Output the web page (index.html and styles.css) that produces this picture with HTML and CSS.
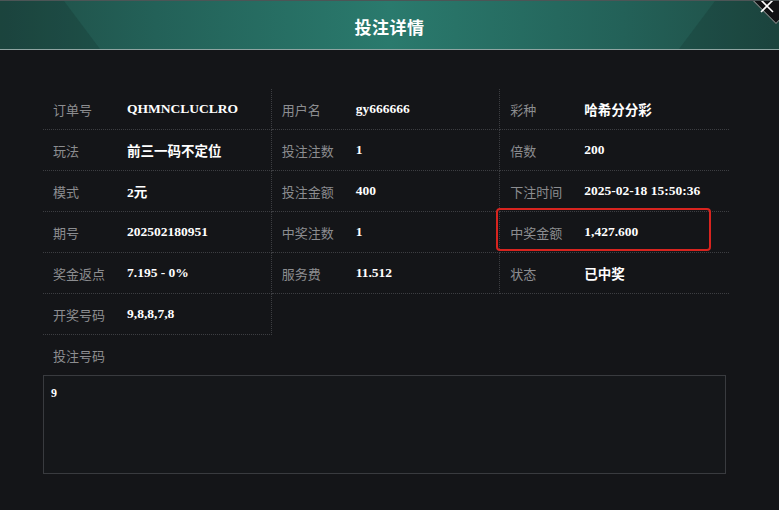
FILE: index.html
```html
<!DOCTYPE html>
<html lang="zh-CN">
<head>
    <meta charset="UTF-8">
    <meta name="viewport" content="width=device-width, initial-scale=1.0">
    <title>投注详情</title>
    <link rel="stylesheet" href="styles.css">
</head>
<body>
    <div class="modal">
        <div class="header">
            <h1>投注详情</h1>
            <div class="close">
                <svg width="14" height="14" viewBox="0 0 14 14">
                    <path d="M1 1 L13 13 M13 1 L1 13" stroke="#fff" stroke-width="1.6" fill="none"/>
                </svg>
            </div>
        </div>
        <div class="content">
            <div class="grid">
                <div class="item"><span class="label">订单号</span><span class="value">QHMNCLUCLRO</span></div>
                <div class="item"><span class="label">用户名</span><span class="value">gy666666</span></div>
                <div class="item"><span class="label">彩种</span><span class="value">哈希分分彩</span></div>

                <div class="item"><span class="label">玩法</span><span class="value">前三一码不定位</span></div>
                <div class="item"><span class="label">投注注数</span><span class="value">1</span></div>
                <div class="item"><span class="label">倍数</span><span class="value">200</span></div>

                <div class="item"><span class="label">模式</span><span class="value">2元</span></div>
                <div class="item"><span class="label">投注金额</span><span class="value">400</span></div>
                <div class="item"><span class="label">下注时间</span><span class="value">2025-02-18 15:50:36</span></div>

                <div class="item"><span class="label">期号</span><span class="value">202502180951</span></div>
                <div class="item"><span class="label">中奖注数</span><span class="value">1</span></div>
                <div class="item"><span class="label">中奖金额</span><span class="value">1,427.600</span><span class="mark"></span></div>

                <div class="item"><span class="label">奖金返点</span><span class="value">7.195 - 0%</span></div>
                <div class="item"><span class="label">服务费</span><span class="value">11.512</span></div>
                <div class="item"><span class="label">状态</span><span class="value">已中奖</span></div>

                <div class="item"><span class="label">开奖号码</span><span class="value">9,8,8,7,8</span></div>
            </div>

            <div class="codes-title">投注号码</div>
            <div class="codes">9</div>
        </div>
    </div>
</body>
</html>
```

FILE: styles.css
```css
body {
    margin: 0;
    padding: 0;
    background: #141518;
    font-family: "Noto Sans CJK SC", "Liberation Sans", sans-serif;
    overflow: hidden;
}
.modal {
    width: 779px;
    height: 510px;
    background: #141518;
}
.header {
    position: relative;
    height: 48px;
    border-top: 1px solid #4c5556;
    border-bottom: 1px solid #8fa5a2;
    background: linear-gradient(90deg, #1f4d45 0%, #236158 20%, #2a7a6d 50%, #236158 80%, #1f4d45 100%);
    display: flex;
    justify-content: center;
    align-items: center;
    overflow: hidden;
}
.header::before,
.header::after {
    content: "";
    position: absolute;
    top: 0;
    width: 110px;
    height: 100%;
    background: rgba(10, 30, 26, 0.18);
}
.header::before {
    left: 0;
    clip-path: polygon(0 0, 64px 0, 100px 100%, 0 100%);
}
.header::after {
    right: 0;
    clip-path: polygon(46px 0, 110px 0, 110px 100%, 10px 100%);
}
.header h1 {
    margin: 2px 0 0;
    font-size: 17px;
    font-weight: bold;
    color: #fff;
    letter-spacing: 0.5px;
}
.close {
    position: absolute;
    top: -24px;
    right: -20px;
    width: 46px;
    height: 46px;
    z-index: 2;
}
.close::before {
    content: "";
    position: absolute;
    left: 6px;
    top: 6px;
    width: 32px;
    height: 32px;
    background: #111214;
    border: 1px solid #8a9593;
    transform: rotate(45deg);
}
.close svg {
    position: absolute;
    left: 7px;
    top: 22px;
}
.content {
    padding: 39px 50px 0 43px;
}
.grid {
    display: flex;
    flex-wrap: wrap;
    width: 686px;
}
.item {
    position: relative;
    box-sizing: border-box;
    width: 33.333%;
    height: 41px;
    padding-left: 10px;
    display: flex;
    align-items: center;
    border-bottom: 1px dotted #3d3e42;
    border-right: 1px dotted #3d3e42;
}
.item:nth-child(3n) {
    border-right: none;
}
.label {
    width: 74px;
    flex-shrink: 0;
    font-size: 13px;
    color: #8c8d90;
}
.value {
    font-family: "Liberation Serif", "Noto Sans CJK SC", serif;
    font-size: 13.5px;
    font-weight: bold;
    color: #fff;
}
.mark {
    position: absolute;
    left: -4px;
    top: -4px;
    width: 211px;
    height: 39px;
    border: 2.5px solid #d8241f;
    border-radius: 4px;
}
.codes-title {
    padding: 11px 0 0 10px;
    line-height: 20px;
    font-size: 13px;
    color: #8c8d90;
}
.codes {
    box-sizing: border-box;
    width: 683px;
    height: 99px;
    margin-top: 9px;
    padding: 9px 7px;
    border: 1px solid #393b3f;
    background: #15171a;
    font-family: "Liberation Serif", serif;
    font-size: 12px;
    font-weight: bold;
    line-height: 16px;
    color: #fff;
}
```
